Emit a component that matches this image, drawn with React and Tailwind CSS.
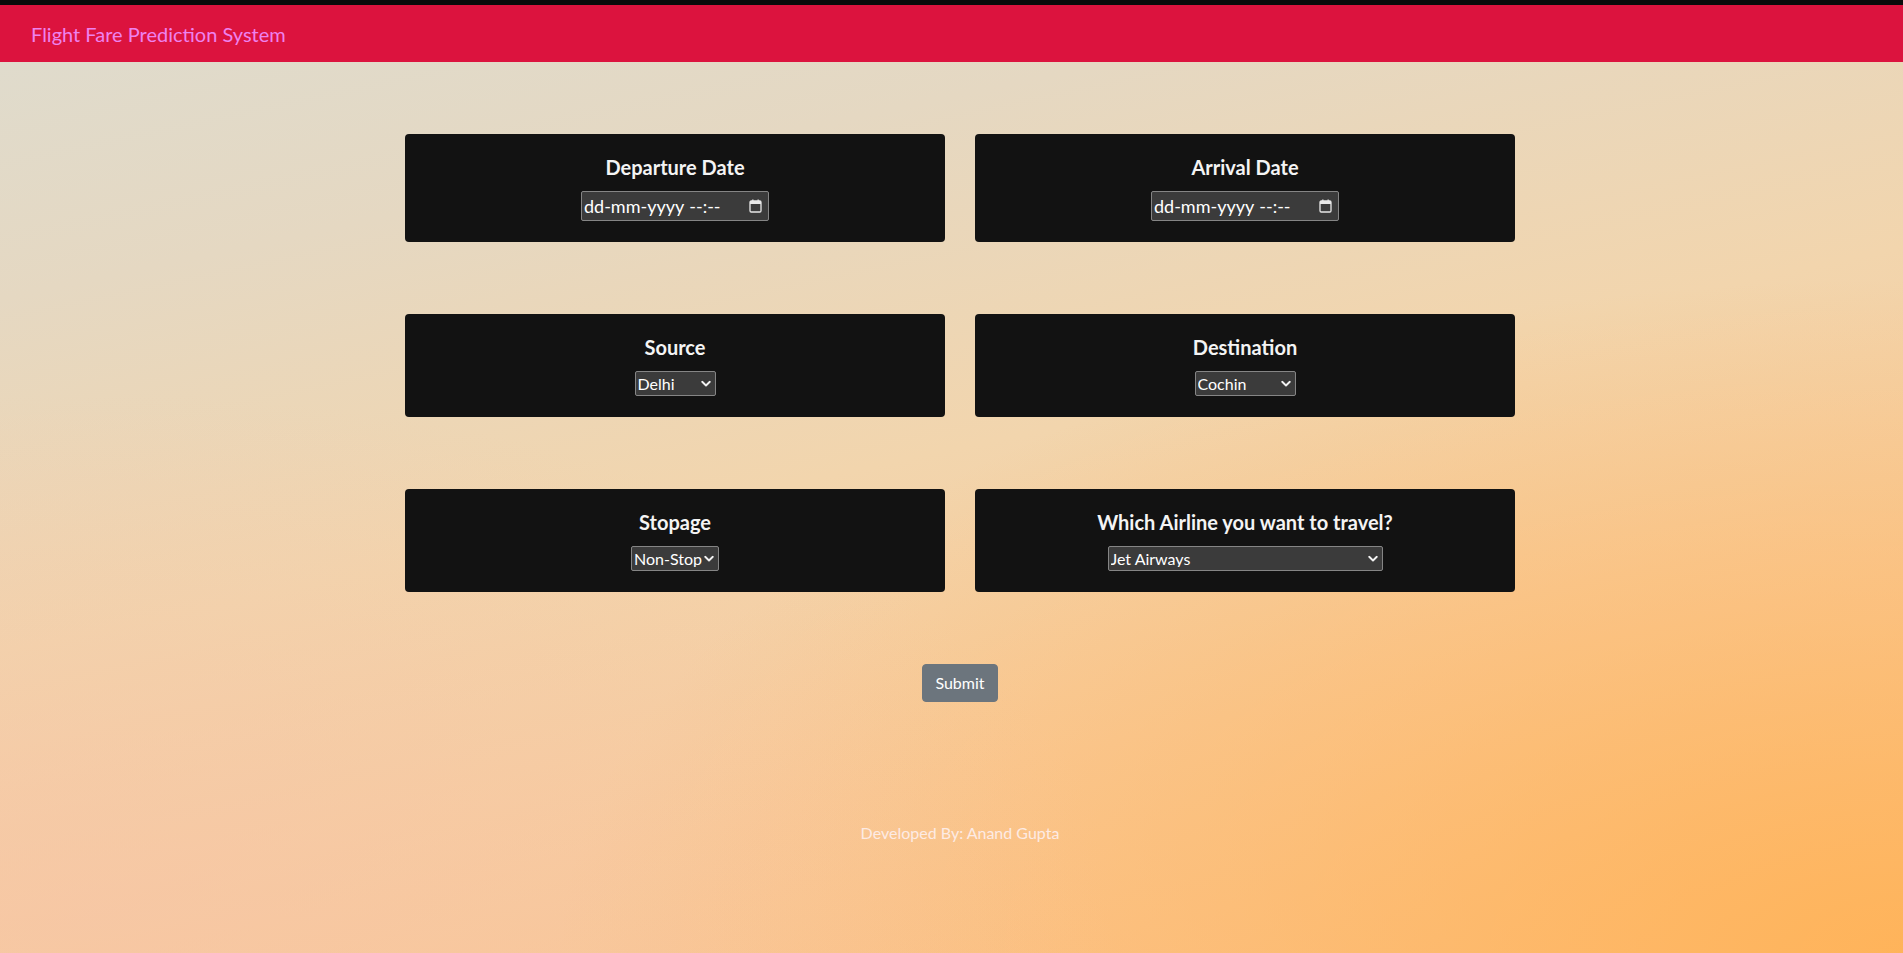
import React from "react";

function Chevron() {
  return (
    <svg width="10" height="7" viewBox="0 0 10 7" className="pointer-events-none absolute right-[5px] top-1/2 -translate-y-1/2">
      <path d="M1.2 1.3 L5 5 L8.8 1.3" fill="none" stroke="#f2f2f2" strokeWidth="1.9" strokeLinecap="round" strokeLinejoin="round" />
    </svg>
  );
}

function CalendarIcon() {
  return (
    <svg width="13" height="14" viewBox="0 0 13 14" className="shrink-0">
      <rect x="1" y="2" width="11" height="11" rx="1.2" fill="none" stroke="#e8e8e8" strokeWidth="1.3" />
      <rect x="1" y="2" width="11" height="3" fill="#e8e8e8" />
      <rect x="3.2" y="0.5" width="1.3" height="2.5" fill="#e8e8e8" />
      <rect x="8.5" y="0.5" width="1.3" height="2.5" fill="#e8e8e8" />
    </svg>
  );
}

function DateField() {
  return (
    <div className="flex h-[30px] w-[188px] items-center justify-between rounded-[2px] border border-[#858585] bg-[#3b3b3b] pl-[2px] pr-[6px] text-[18px] leading-none text-white">
      <span>
        dd-mm-yyyy<span className="ml-[5px]">--:--</span>
      </span>
      <CalendarIcon />
    </div>
  );
}

function Select({ width, value, options }) {
  return (
    <div className={`relative ${width}`}>
      <select
        defaultValue={value}
        className="h-[25px] w-full appearance-none rounded-[2px] border border-[#858585] bg-[#3b3b3b] pl-[2px] pr-[13px] text-[16px] leading-none text-white outline-none"
        style={{ fontFamily: "Lato, 'Open Sans', sans-serif" }}
      >
        {options.map((o) => (
          <option key={o} value={o}>
            {o}
          </option>
        ))}
      </select>
      <Chevron />
    </div>
  );
}

function Card({ title, children }) {
  return (
    <div className="flex flex-col items-center rounded-[4px] bg-[#121212] pb-[21px] pt-[21px]">
      <h5 className="mb-[12px] h-[24px] text-[20px] font-bold leading-[24px] text-[#f4f4f4]">{title}</h5>
      {children}
    </div>
  );
}

export default function App() {
  return (
    <div
      className="relative min-h-screen w-full overflow-hidden bg-[linear-gradient(168deg,#dedccf_0%,#e5d8c2_22%,#f2d5ad_48%,#f8cb9c_72%,#fcc188_100%)]"
      style={{ fontFamily: "Lato, 'Open Sans', sans-serif" }}
    >
      <div className="pointer-events-none absolute inset-0 bg-[radial-gradient(ellipse_at_100%_100%,rgba(255,178,85,0.9)_0%,rgba(255,180,90,0.45)_25%,rgba(255,180,90,0)_50%)]" />
      <div className="pointer-events-none absolute inset-0 bg-[radial-gradient(ellipse_at_5%_95%,rgba(246,196,168,0.6)_0%,rgba(246,196,168,0)_40%)]" />
      <div className="relative">
        <div className="h-[5px] bg-[#0b0b0b]" />
        <header className="flex h-[57px] items-center bg-[#dc133e] pl-[31px]">
          <span className="text-[20px] text-[#ee82ee]">Flight Fare Prediction System</span>
        </header>

        <div className="pl-[17px]">
          <main className="mx-auto w-[1110px] pt-[72px]">
            <div className="grid grid-cols-2 gap-x-[30px] gap-y-[72px]">
              <Card title="Departure Date">
                <DateField />
              </Card>
              <Card title="Arrival Date">
                <DateField />
              </Card>
              <Card title="Source">
                <Select width="w-[81px]" value="Delhi" options={["Delhi", "Kolkata", "Mumbai", "Chennai", "Banglore"]} />
              </Card>
              <Card title="Destination">
                <Select width="w-[101px]" value="Cochin" options={["Cochin", "Delhi", "New Delhi", "Hyderabad", "Kolkata"]} />
              </Card>
              <Card title="Stopage">
                <Select width="w-[88px]" value="Non-Stop" options={["Non-Stop", "1", "2", "3", "4"]} />
              </Card>
              <Card title="Which Airline you want to travel?">
                <Select
                  width="w-[275px]"
                  value="Jet Airways"
                  options={["Jet Airways", "IndiGo", "Air India", "Multiple carriers", "SpiceJet", "Vistara", "Air Asia", "GoAir"]}
                />
              </Card>
            </div>

            <div className="mt-[72px] flex justify-center">
              <button className="h-[38px] rounded-[4px] border border-[#6c757d] bg-[#6c757d] px-[12px] text-[16px] text-white">
                Submit
              </button>
            </div>

            <p className="mt-[119px] text-center text-[16px] leading-[24px] text-[#fdebe4]">Developed By: Anand Gupta</p>
          </main>
        </div>
      </div>
    </div>
  );
}
